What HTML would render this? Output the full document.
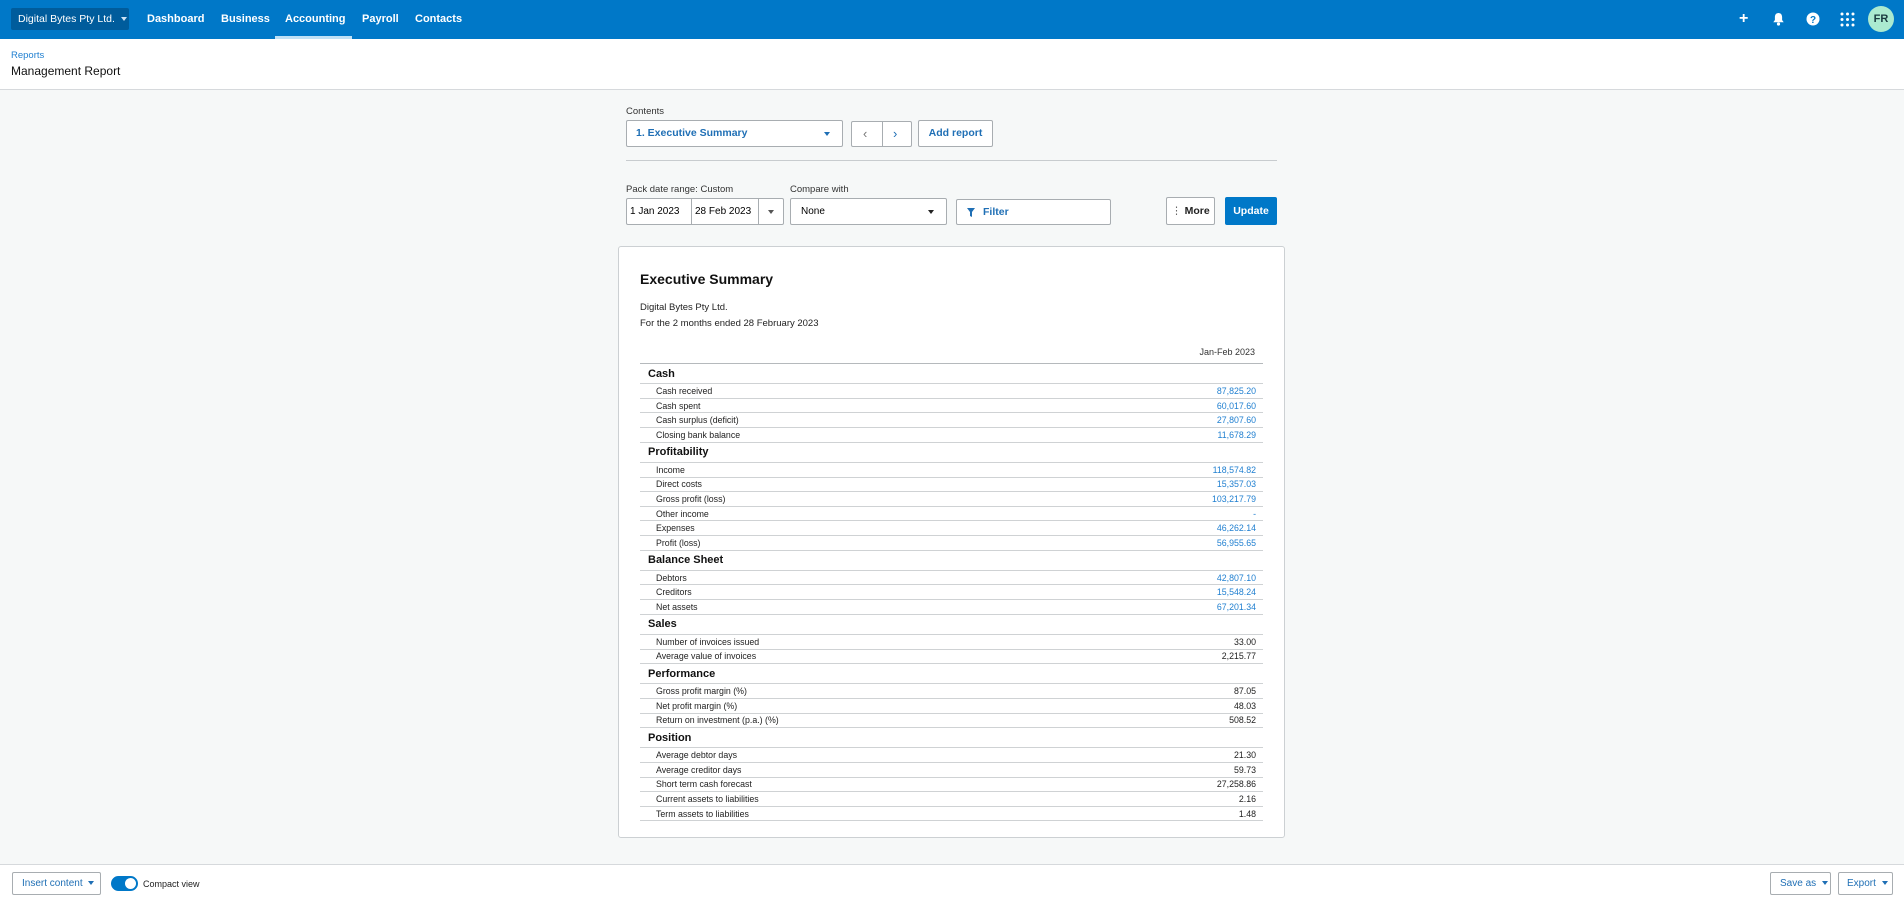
<!DOCTYPE html>
<html><head><meta charset="utf-8"><style>
*{box-sizing:border-box;margin:0;padding:0}
body{width:1904px;height:898px;overflow:hidden;background:#f6f8f8;font-family:"Liberation Sans",Arial,sans-serif;color:#000;position:relative}
.abs{position:absolute}
.nav{left:0;top:0;width:1904px;height:39px;background:#0078c8}
.org{left:11px;top:8px;width:118px;height:22px;background:#005c9c;border-radius:2px;color:#fff;font-size:10.5px;line-height:22px;padding-left:7px}
.ni{top:0;height:39px;line-height:39px;color:#fff;font-weight:bold;font-size:11px}
.hdr{left:0;top:39px;width:1904px;height:51px;background:#fff;border-bottom:1px solid #d6d9dc}
.btn{background:#fff;border:1px solid #a8adb1;border-radius:2px;font-size:10.5px}
.lbl{font-size:9.5px;color:#333}
.card{left:618px;top:246px;width:667px;height:592px;background:#fff;border:1px solid #ccd0d3;border-radius:3px}
table{border-collapse:collapse;position:absolute;left:21px;top:116px;width:623px}
td{font-size:8.8px;height:14.6px;border-bottom:1px solid #cfd2d4;padding:0;color:#222;vertical-align:middle}
td.l{padding-left:16px}
td.v{text-align:right;padding-right:7px}
td.b{color:#1f7fd0}
tr.s td{height:20.3px;font-size:11px;font-weight:bold;padding-left:8px;color:#111;border-bottom:1px solid #cfd2d4}
.caret{display:inline-block;border-left:3.5px solid transparent;border-right:3.5px solid transparent;border-top:4px solid currentColor;vertical-align:middle}
.bot{left:0;top:864px;width:1904px;height:34px;background:#fff;border-top:1px solid #d6d9dc}
</style></head><body>
<div class="abs nav"></div>
<div class="abs org">Digital Bytes Pty Ltd.&nbsp;&nbsp;<span class="caret" style="color:#cfe3f4"></span></div>
<div class="abs ni" style="left:147px">Dashboard</div>
<div class="abs ni" style="left:221px">Business</div>
<div class="abs ni" style="left:285px">Accounting</div>
<div class="abs" style="left:275px;top:36px;width:77px;height:3px;background:#bfe0f5"></div>
<div class="abs ni" style="left:362px">Payroll</div>
<div class="abs ni" style="left:415px">Contacts</div>
<div class="abs" style="left:1739px;top:10px;color:#fff;font-size:16px;font-weight:bold">+</div>
<svg class="abs" style="left:1772px;top:12px" width="13" height="14" viewBox="0 0 13 14"><path d="M6.5 1c2.3 0 3.6 1.8 3.6 4v3l1.6 2.2H1.3L2.9 8V5c0-2.2 1.3-4 3.6-4z" fill="#fff"/><circle cx="6.5" cy="12" r="1.6" fill="#fff"/></svg>
<svg class="abs" style="left:1806px;top:12px" width="14" height="14" viewBox="0 0 14 14"><circle cx="7" cy="7" r="6.5" fill="#fff"/><text x="7" y="11" text-anchor="middle" font-size="10" font-weight="bold" fill="#0078c8" font-family="Liberation Sans">?</text></svg>
<svg class="abs" style="left:1840px;top:12px" width="15" height="15" viewBox="0 0 15 15" fill="#fff"><circle cx="2" cy="2" r="1.5"/><circle cx="7.5" cy="2" r="1.5"/><circle cx="13" cy="2" r="1.5"/><circle cx="2" cy="7.5" r="1.5"/><circle cx="7.5" cy="7.5" r="1.5"/><circle cx="13" cy="7.5" r="1.5"/><circle cx="2" cy="13" r="1.5"/><circle cx="7.5" cy="13" r="1.5"/><circle cx="13" cy="13" r="1.5"/></svg>
<div class="abs" style="left:1868px;top:6px;width:26px;height:26px;border-radius:50%;background:#abead0;color:#1a3a40;font-size:11px;font-weight:bold;text-align:center;line-height:26px">FR</div>

<div class="abs hdr"></div>
<div class="abs" style="left:11px;top:50px;font-size:9.5px;color:#1f7fd0">Reports</div>
<div class="abs" style="left:11px;top:64px;font-size:12px;color:#111">Management Report</div>

<div class="abs lbl" style="left:626px;top:106px">Contents</div>
<div class="abs btn" style="left:626px;top:120px;width:217px;height:27px;line-height:25px;padding-left:9px;color:#1f6fb5;font-weight:bold">1. Executive Summary<span class="caret" style="position:absolute;right:12px;top:11px;color:#1f6fb5"></span></div>
<div class="abs btn" style="left:851px;top:121px;width:61px;height:26px"><div style="position:absolute;left:30px;top:0;width:1px;height:24px;background:#a8adb1"></div><span style="position:absolute;left:11px;top:4px;font-size:13px;color:#777">‹</span><span style="position:absolute;left:41px;top:4px;font-size:13px;color:#1f6fb5">›</span></div>
<div class="abs btn" style="left:918px;top:120px;width:75px;height:27px;line-height:25px;text-align:center;color:#1f6fb5;font-weight:bold">Add report</div>
<div class="abs" style="left:626px;top:160px;width:651px;height:1px;background:#c8cccf"></div>

<div class="abs lbl" style="left:626px;top:184px">Pack date range: Custom</div>
<div class="abs lbl" style="left:790px;top:184px">Compare with</div>
<div class="abs btn" style="left:626px;top:198px;width:158px;height:27px;font-size:10px;line-height:25px">
<span style="position:absolute;left:3px">1 Jan 2023</span>
<div style="position:absolute;left:64px;top:0;width:1px;height:25px;background:#a8adb1"></div>
<span style="position:absolute;left:68px">28 Feb 2023</span>
<div style="position:absolute;left:131px;top:0;width:1px;height:25px;background:#a8adb1"></div>
<span class="caret" style="position:absolute;left:141px;top:11px;color:#555"></span></div>
<div class="abs btn" style="left:790px;top:198px;width:157px;height:27px;line-height:25px;padding-left:10px;font-size:10px">None<span class="caret" style="position:absolute;right:12px;top:11px;color:#222"></span></div>
<div class="abs btn" style="left:956px;top:199px;width:155px;height:26px;line-height:24px;padding-left:26px;color:#1f6fb5;font-weight:bold;font-size:10.5px"><svg style="position:absolute;left:10px;top:8px" width="8" height="9" viewBox="0 0 8 9"><path d="M0 0h8L5 4v5L3 8V4z" fill="#1f6fb5"/></svg>Filter</div>
<div class="abs btn" style="left:1166px;top:197px;width:49px;height:28px;line-height:26px;text-align:center;font-weight:bold;font-size:10.5px;color:#222"><span style="color:#666;font-weight:normal">⋮</span> More</div>
<div class="abs" style="left:1225px;top:197px;width:52px;height:28px;background:#0078c8;border-radius:2px;color:#fff;font-weight:bold;font-size:10.5px;line-height:28px;text-align:center">Update</div>

<div class="abs card">
<div class="abs" style="left:21px;top:24px;font-size:14px;font-weight:bold;color:#111">Executive Summary</div>
<div class="abs" style="left:21px;top:55px;font-size:9.5px;color:#222">Digital Bytes Pty Ltd.</div>
<div class="abs" style="left:21px;top:71px;font-size:9.5px;color:#222">For the 2 months ended 28 February 2023</div>
<div class="abs" style="right:29px;top:100px;font-size:9px;color:#333">Jan-Feb 2023</div>
<table style="border-top:1px solid #b5b9bc">
<tr class="s"><td colspan="2">Cash</td></tr>
<tr><td class="l">Cash received</td><td class="v b">87,825.20</td></tr>
<tr><td class="l">Cash spent</td><td class="v b">60,017.60</td></tr>
<tr><td class="l">Cash surplus (deficit)</td><td class="v b">27,807.60</td></tr>
<tr><td class="l">Closing bank balance</td><td class="v b">11,678.29</td></tr>
<tr class="s"><td colspan="2">Profitability</td></tr>
<tr><td class="l">Income</td><td class="v b">118,574.82</td></tr>
<tr><td class="l">Direct costs</td><td class="v b">15,357.03</td></tr>
<tr><td class="l">Gross profit (loss)</td><td class="v b">103,217.79</td></tr>
<tr><td class="l">Other income</td><td class="v b">-</td></tr>
<tr><td class="l">Expenses</td><td class="v b">46,262.14</td></tr>
<tr><td class="l">Profit (loss)</td><td class="v b">56,955.65</td></tr>
<tr class="s"><td colspan="2">Balance Sheet</td></tr>
<tr><td class="l">Debtors</td><td class="v b">42,807.10</td></tr>
<tr><td class="l">Creditors</td><td class="v b">15,548.24</td></tr>
<tr><td class="l">Net assets</td><td class="v b">67,201.34</td></tr>
<tr class="s"><td colspan="2">Sales</td></tr>
<tr><td class="l">Number of invoices issued</td><td class="v">33.00</td></tr>
<tr><td class="l">Average value of invoices</td><td class="v">2,215.77</td></tr>
<tr class="s"><td colspan="2">Performance</td></tr>
<tr><td class="l">Gross profit margin (%)</td><td class="v">87.05</td></tr>
<tr><td class="l">Net profit margin (%)</td><td class="v">48.03</td></tr>
<tr><td class="l">Return on investment (p.a.) (%)</td><td class="v">508.52</td></tr>
<tr class="s"><td colspan="2">Position</td></tr>
<tr><td class="l">Average debtor days</td><td class="v">21.30</td></tr>
<tr><td class="l">Average creditor days</td><td class="v">59.73</td></tr>
<tr><td class="l">Short term cash forecast</td><td class="v">27,258.86</td></tr>
<tr><td class="l">Current assets to liabilities</td><td class="v">2.16</td></tr>
<tr><td class="l">Term assets to liabilities</td><td class="v">1.48</td></tr>
</table>
</div>

<div class="abs bot"></div>
<div class="abs btn" style="left:12px;top:872px;width:89px;height:23px;line-height:21px;padding-left:9px;color:#1f6fb5;font-size:10px">Insert content <span class="caret" style="margin-left:3px"></span></div>
<div class="abs" style="left:111px;top:876px;width:27px;height:15px;border-radius:8px;background:#0078c8"><div style="position:absolute;right:2px;top:2px;width:11px;height:11px;border-radius:50%;background:#fff"></div></div>
<div class="abs" style="left:143px;top:879px;font-size:9px;color:#222">Compact view</div>
<div class="abs btn" style="left:1770px;top:872px;width:61px;height:23px;line-height:21px;padding-left:9px;color:#1f6fb5;font-size:10px">Save as <span class="caret" style="margin-left:3px"></span></div>
<div class="abs btn" style="left:1838px;top:872px;width:55px;height:23px;line-height:21px;padding-left:8px;color:#1f6fb5;font-size:10px">Export <span class="caret" style="margin-left:3px"></span></div>
</body></html>
